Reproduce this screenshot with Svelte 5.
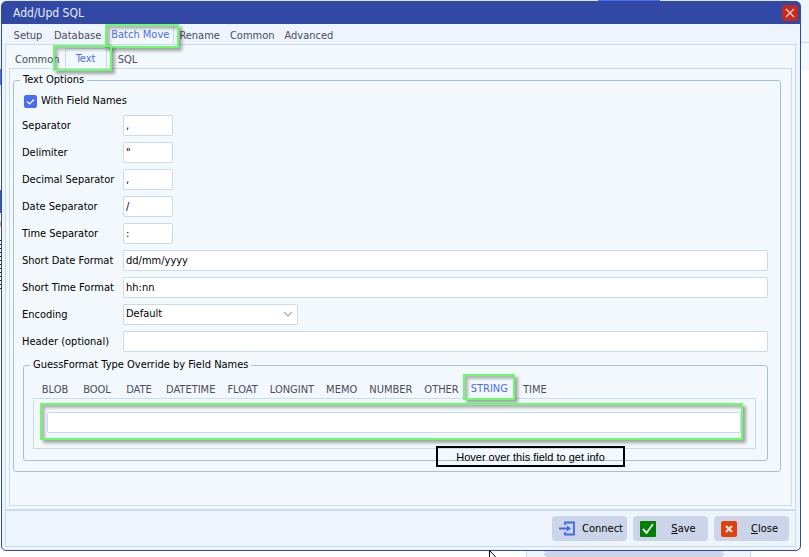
<script>
  const mainTabs = ['Setup', 'Database', 'Batch Move', 'Rename', 'Common', 'Advanced'];
  const subTabs = ['Common', 'Text', 'SQL'];
  const typeTabs = ['BLOB', 'BOOL', 'DATE', 'DATETIME', 'FLOAT', 'LONGINT', 'MEMO', 'NUMBER', 'OTHER', 'STRING', 'TIME'];

  let mainTab = $state('Batch Move');
  let subTab = $state('Text');
  let typeTab = $state('STRING');
  let withNames = $state(true);
  let encoding = $state('Default');
  let override = $state('');

  let separators = $state([
    { id: 'sep', label: 'Separator', value: ',' },
    { id: 'delim', label: 'Delimiter', value: '"' },
    { id: 'decimal', label: 'Decimal Separator', value: ',' },
    { id: 'date-sep', label: 'Date Separator', value: '/' },
    { id: 'time-sep', label: 'Time Separator', value: ':' }
  ]);
  let formats = $state([
    { id: 'short-date', label: 'Short Date Format', value: 'dd/mm/yyyy' },
    { id: 'short-time', label: 'Short Time Format', value: 'hh:nn' }
  ]);
  let header = $state('');
</script>

<div class="desktop">
  <div class="behind" aria-hidden="true">
    <i class="topstrip"></i>
    <i class="topactive"></i>
    <i class="rightpane"></i>
    <i class="leftpane"></i>
    <i class="leftmark m1"></i>
    <i class="leftmark m2"></i>
    <i class="leftmark m3"></i>
    <i class="leftmark m4"></i>
    <i class="under"><b></b><b></b></i>
  </div>

  <main class="dialog">
    <header class="titlebar">
      <h1>Add/Upd SQL</h1>
      <button class="x" aria-label="Close window">
        <svg width="10" height="10" viewBox="0 0 10 10"><path d="M1 1l8 8M9 1l-8 8" stroke="#f6d9d6" stroke-width="1.2" fill="none" /></svg>
      </button>
    </header>

    <div class="tabs main-tabs" role="tablist">
      {#each mainTabs as t}
        <button role="tab" class="tab" class:active={t === mainTab} aria-selected={t === mainTab} onclick={() => (mainTab = t)}>
          {t}{#if t === 'Batch Move'}<span class="mark mark-main"></span>{/if}
        </button>
      {/each}
    </div>

    <section class="page">
      <div class="tabs sub-tabs" role="tablist">
        {#each subTabs as t}
          <button role="tab" class="tab" class:active={t === subTab} aria-selected={t === subTab} onclick={() => (subTab = t)}>
            {t}{#if t === 'Text'}<span class="mark mark-sub"></span>{/if}
          </button>
        {/each}
      </div>

      <div class="subpage">
        <fieldset class="group">
          <legend>Text Options</legend>
          <label class="check">
            <input type="checkbox" bind:checked={withNames} />
            <span>With Field Names</span>
          </label>

          <div class="form">
            {#each separators as f}
              <label for={f.id}>{f.label}</label>
              <input id={f.id} class="field short" type="text" bind:value={f.value} />
            {/each}
            {#each formats as f}
              <label for={f.id}>{f.label}</label>
              <input id={f.id} class="field" type="text" bind:value={f.value} />
            {/each}
            <label for="encoding">Encoding</label>
            <div class="select">
              <select id="encoding" class="field" bind:value={encoding}>
                <option>Default</option>
                <option>ANSI</option>
                <option>UTF8</option>
              </select>
              <svg width="10" height="6" viewBox="0 0 10 6"><path d="M1 1l4 4 4-4" fill="none" stroke="#9fb2c6" stroke-width="1.2" /></svg>
            </div>
            <label for="header">Header (optional)</label>
            <input id="header" class="field" type="text" bind:value={header} />
          </div>

          <fieldset class="group inner">
            <legend>GuessFormat Type Override by Field Names</legend>
            <div class="tabs type-tabs" role="tablist">
              {#each typeTabs as t}
                <button role="tab" class="tab" class:active={t === typeTab} aria-selected={t === typeTab} onclick={() => (typeTab = t)}>
                  {t}{#if t === 'STRING'}<span class="mark mark-type"></span>{/if}
                </button>
              {/each}
            </div>
            <div class="typepage">
              <input class="field" type="text" aria-label="Field names" bind:value={override} />
              <span class="mark mark-field"></span>
              <span class="note">Hover over this field to get info</span>
            </div>
          </fieldset>
        </fieldset>
      </div>
    </section>

    <footer>
      <button class="btn">
        <svg width="16" height="16" viewBox="0 0 16 16"><path d="M6 4V1.500h9v12H6V11M0 7.500h10" fill="none" stroke="#4169e1" stroke-width="1.800" /><path d="M8 4.500l4 3-4 3z" fill="#4169e1" /></svg>
        <span>Connect</span>
      </button>
      <button class="btn">
        <svg width="16" height="16" viewBox="0 0 16 16"><rect width="16" height="16" rx="1" fill="#008000" /><path d="M3 8l3.500 4L13 3" fill="none" stroke="#dfe6f0" stroke-width="2" /></svg>
        <span><u>S</u>ave</span>
      </button>
      <button class="btn">
        <svg width="16" height="16" viewBox="0 0 16 16"><rect width="16" height="16" rx="2" fill="#e2400b" /><path d="M5 5l6 6M11 5l-6 6" fill="none" stroke="#dcdce6" stroke-width="2.400" /></svg>
        <span><u>C</u>lose</span>
      </button>
    </footer>
  </main>

  <svg class="cursor" width="12" height="19" viewBox="0 0 12 19" aria-hidden="true"><path d="M.5.5v16l4-4 3 6 2-1-3-5.500h5z" fill="#fff" stroke="#000" /></svg>
</div>

<style>
  :global(body) { margin: 0; background: #fff; }
  .desktop {
    position: relative;
    box-sizing: border-box;
    min-height: 100vh;
    padding: 1px 8px 6px 1px;
    overflow: hidden;
    display: flex;
    font-family: "DejaVu Sans Condensed", "Noto Sans", sans-serif;
    font-size: 11px;
    line-height: 14px;
    color: #000;
  }
  button, input, select { font: inherit; color: inherit; box-sizing: border-box; margin: 0; }
  button { border: 0; background: none; padding: 0; }

  .behind i, .behind b { display: block; }
  .behind > i { position: absolute; }
  .topstrip { left: 0; right: 0; top: 0; height: 10px; background: #dbe5f1; }
  .topactive { left: 598px; width: 62px; top: 0; height: 4px; background: #4a6cf0; }
  .rightpane { right: 0; width: 20px; top: 0; height: 71px; background: linear-gradient(#eef4fc 42px, #c9dcee 42px 43px, #f3f8fd 43px); }
  .leftpane { left: 0; width: 8px; top: 0; height: 97px; background: #eef4fc; }
  .leftmark { left: 0; width: 2px; }
  .m1 { top: 69px; height: 16px; background: #4a6cf0; }
  .m2 { top: 190px; height: 23px; background: #3f57b3; }
  .m3 { top: 221px; height: 6px; background: #e8b04a; }
  .m4 { top: 240px; height: 50px; background: repeating-linear-gradient(#222 0 1px, #fff 1px 4px); }
  .under {
    left: 526px; width: 225px; bottom: 0; height: 8px; box-sizing: border-box;
    border: solid #c9dcee; border-width: 0 1px; background: #eef4fc;
    display: flex; gap: 8px; padding: 0 26px 0 17px;
  }
  .under b { flex: 1; height: 4px; background: #cbd4e8; border-radius: 0 0 4px 4px; }

  .dialog {
    position: relative;
    flex: 1;
    min-width: 0;
    display: flex;
    flex-direction: column;
    box-sizing: border-box;
    border: 1px solid #3149a5;
    border-radius: 5px;
    background: #eef4fc;
    padding: 0 4px 3px 3px;
  }
  .titlebar {
    display: flex;
    align-items: center;
    justify-content: space-between;
    height: 22px;
    margin: 0 -4px 0 -3px;
    padding: 0 2px 0 11px;
    background: #3149a5;
    border-radius: 3px 3px 0 0;
  }
  h1 { margin: 0; font-size: 12px; font-weight: 400; color: #e6ebf8; }
  .x { width: 16px; height: 16px; border-radius: 3px; background: #c42b1c; display: grid; place-items: center; }

  .tabs { display: flex; }
  .tab {
    position: relative;
    min-width: 42px;
    height: 20px;
    padding: 2px 4px 0;
    border: 1px solid transparent;
    border-bottom: 0;
    border-radius: 3px 3px 0 0;
    color: #4c4c5c;
    white-space: nowrap;
  }
  .tab.active { color: #4a6cf0; border-color: #c9dcee; background: #f3f8fd; padding-top: 0; }
  .main-tabs { padding: 0 2px; }
  .sub-tabs { padding: 0 1px; }
  .mark {
    position: absolute;
    z-index: 2;
    box-sizing: border-box;
    border: 2px solid #66ff66;
    box-shadow: 3px 3px 3px #0005, inset 3px 3px 3px #0004;
    pointer-events: none;
  }
  .mark-main { inset: -1px -6px -4px -2px; }
  .mark-sub { inset: -4px -6px -3px -13px; }

  .page {
    flex: 1;
    display: flex;
    flex-direction: column;
    border: 1px solid #c9dcee;
    border-bottom-width: 2px;
    padding: 3px;
    background: #f3f8fd;
  }
  .subpage { flex: 1; border: 1px solid #c9dcee; padding: 4px 10px 4px 3px; }
  .group {
    margin: 0;
    min-width: 0;
    padding: 0 12px 10px 8px;
    border: 1px solid #a9bfd6;
    border-radius: 3px;
  }
  legend { padding: 0 3px; margin-left: -2px; }
  .check { display: flex; align-items: center; gap: 4px; height: 14px; margin: 7px 0 7px 2px; }
  .check input {
    appearance: none; width: 13px; height: 13px; border-radius: 2px; border: 1px solid #a9bfd6; background: #fff;
  }
  .check input:checked {
    border-color: #4a6cf0;
    background: #4a6cf0 url("data:image/svg+xml,%3Csvg xmlns='http://www.w3.org/2000/svg' viewBox='0 0 11 11'%3E%3Cpath d='M2 5.500l2.500 2.500L9 3.500' fill='none' stroke='white' stroke-width='1.200'/%3E%3C/svg%3E") center / 11px no-repeat;
  }
  .form {
    display: grid;
    grid-template-columns: 101px 1fr;
    grid-auto-rows: 21px;
    row-gap: 6px;
    align-items: center;
    margin-bottom: 6px;
  }
  .form label { white-space: nowrap; }
  .field {
    width: 100%;
    height: 21px;
    padding: 0 2px 1px;
    border: 1px solid #c9dcee;
    border-radius: 2px;
    background: #fff;
    outline: none;
  }
  .short { width: 50px; }
  .select { position: relative; width: 175px; height: 21px; }
  .select select { appearance: none; }
  .select svg { position: absolute; right: 5px; top: 7px; pointer-events: none; }

  .inner { margin-left: 1px; padding: 0 11px 11px 9px; }
  .inner legend { margin-left: -3px; }
  .type-tabs { padding: 7px 0 0 1px; }
  .type-tabs .tab { height: 19px; padding: 1px 5px 0; }
  .type-tabs .tab.active { border-color: transparent; padding-top: 0; }
  .mark-type { inset: -6px -2px -2px -3px; }
  .typepage { position: relative; border: 1px solid #c9dcee; padding: 13px 14px 15px 13px; }
  .typepage .field { display: block; }
  .mark-field { inset: 4px 12px 8px 6px; }
  .note {
    position: absolute;
    z-index: 3;
    top: 47px;
    left: 402px;
    width: 189px;
    box-sizing: border-box;
    border: 2px solid #000;
    padding: 2px 0 1px;
    text-align: center;
    font: 11px/14px "Liberation Sans", Arial, sans-serif;
  }

  footer {
    display: flex;
    justify-content: flex-end;
    gap: 6px;
    padding: 5px 6px;
    border: 1px solid #c9dcee;
    border-top: 0;
  }
  .btn {
    display: flex;
    align-items: center;
    gap: 3px;
    width: 75px;
    height: 25px;
    padding-left: 7px;
    background: #cbd4e8;
    border-radius: 4px;
  }
  .btn svg { flex: none; }
  .btn span { flex: 1; text-align: center; }
  .cursor { position: absolute; left: 489px; top: 550px; }
</style>
